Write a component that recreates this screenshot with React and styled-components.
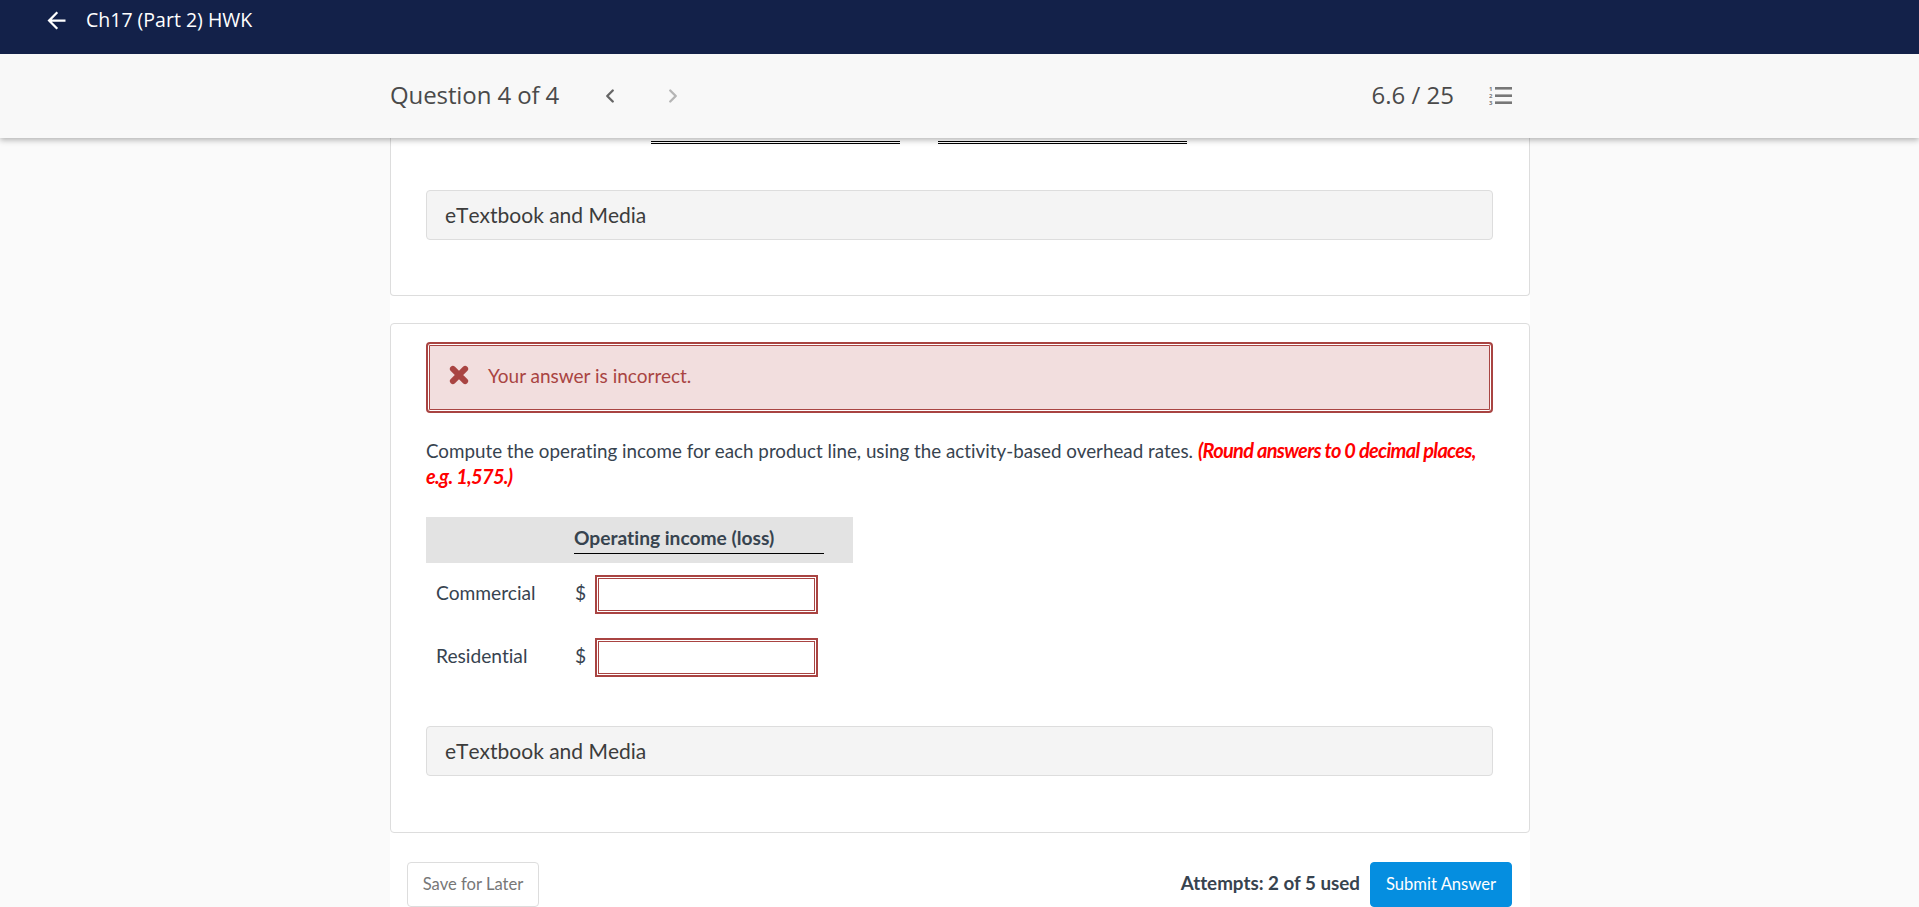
import styled, { createGlobalStyle } from "styled-components";
import { MdArrowBack } from "react-icons/md";
import { FiChevronLeft, FiChevronRight } from "react-icons/fi";

const GlobalStyle = createGlobalStyle`
    html, body {
        margin: 0;
        height: 907px;
        overflow: hidden;
        background: #fafafa;
        font-family: Lato, "Liberation Sans", sans-serif;
        font-variant-ligatures: none;
        color: #37434f;
    }
`;

const ListIcon = () => (
    <svg width="23" height="20" viewBox="0 0 23 20" fill="#777">
        <rect x="6" y="1" width="17" height="2.6" />
        <rect x="6" y="8.4" width="17" height="2.6" />
        <rect x="6" y="15.4" width="17" height="2.6" />
        <text x="0" y="5" fontSize="6" fontWeight="700" fontFamily="Open Sans">1</text>
        <text x="0" y="12" fontSize="6" fontWeight="700" fontFamily="Open Sans">2</text>
        <text x="0" y="19" fontSize="6" fontWeight="700" fontFamily="Open Sans">3</text>
    </svg>
);

const CrossIcon = () => (
    <AlertGlyph viewBox="0 0 18 18">
        <path d="M3.5 3.5 L14.5 14.5 M14.5 3.5 L3.5 14.5" stroke="#a94442" strokeWidth="5.4" strokeLinecap="round" />
    </AlertGlyph>
);

const EbookBox = () => <Ebook>eTextbook and Media</Ebook>;

const AnswerRow = ({ label }) => (
    <Row>
        <RowLabel>{label}</RowLabel>
        <Dollar>$</Dollar>
        <AnswerInput type="text" aria-label={label} />
    </Row>
);

const App = () => {
    return (
        <>
            <GlobalStyle />
            <TopBar>
                <BackArrow aria-label="back" />
                <Title>Ch17 (Part 2) HWK</Title>
            </TopBar>
            <SubBar>
                <QuestionCount>Question 4 of 4</QuestionCount>
                <PrevIcon />
                <NextIcon />
                <Score>6.6 / 25</Score>
                <ListIcon />
            </SubBar>
            <Column>
                <PrevCard>
                    <Stubs>
                        <Stub />
                        <Stub />
                    </Stubs>
                    <EbookBox />
                </PrevCard>
                <Card>
                    <Alert>
                        <CrossIcon />
                        <AlertText>Your answer is incorrect.</AlertText>
                    </Alert>
                    <Prompt>
                        Compute the operating income for each product line, using the activity-based overhead rates.{" "}
                        <Hint>(Round answers to 0 decimal places, e.g. 1,575.)</Hint>
                    </Prompt>
                    <AnswerTable>
                        <TableHead>
                            <HeadCell>Operating income (loss)</HeadCell>
                        </TableHead>
                        <AnswerRow label="Commercial" />
                        <AnswerRow label="Residential" />
                    </AnswerTable>
                    <EbookBox />
                </Card>
                <Footer>
                    <SaveButton>Save for Later</SaveButton>
                    <FooterRight>
                        <Attempts>Attempts: 2 of 5 used</Attempts>
                        <SubmitButton>Submit Answer</SubmitButton>
                    </FooterRight>
                </Footer>
            </Column>
        </>
    );
};

const TopBar = styled.div`
    height: 54px;
    background: #132149;
    color: #fff;
    display: flex;
    align-items: flex-start;
    padding: 7px 0 0 43px;
    box-sizing: border-box;
    position: relative;
    z-index: 3;
`;

const BackArrow = styled(MdArrowBack)`
    width: 27px;
    height: 27px;
`;

const Title = styled.div`
    font-family: "Open Sans", sans-serif;
    font-size: 19.5px;
    line-height: 26px;
    font-weight: 500;
    margin-left: 16px;
`;

const SubBar = styled.div`
    height: 84px;
    background: #f8f8f8;
    box-shadow: 0 2px 6px rgba(0, 0, 0, 0.3);
    display: flex;
    align-items: center;
    padding: 0 407px 0 390px;
    box-sizing: border-box;
    position: relative;
    z-index: 2;
    color: #4a4a4a;
    font-family: "Open Sans", sans-serif;
`;

const QuestionCount = styled.div`
    font-size: 24px;
    font-weight: 400;
    letter-spacing: -0.1px;
    margin-top: -3px;
`;

const PrevIcon = styled(FiChevronLeft)`
    width: 22px;
    height: 22px;
    stroke-width: 2.6;
    color: #666;
    margin-left: 40px;
`;

const NextIcon = styled(FiChevronRight)`
    width: 22px;
    height: 22px;
    stroke-width: 2.6;
    color: #b5b5b5;
    margin-left: 41px;
`;

const Score = styled.div`
    font-size: 24px;
    font-weight: 400;
    margin-left: auto;
    margin-right: 35px;
    margin-top: -3px;
`;

const Column = styled.div`
    width: 1140px;
    margin-left: 390px;
    background: #fff;
`;

const Card = styled.div`
    background: #fff;
    border: 1px solid #ddd;
    border-radius: 4px;
    box-sizing: border-box;
    padding: 18px 36px 56px 35px;
`;

const PrevCard = styled(Card)`
    height: 158px;
    margin-bottom: 27px;
    padding-top: 0;
    border-top: 0;
    border-radius: 0 0 4px 4px;
`;

const Stubs = styled.div`
    display: flex;
    gap: 38px;
    padding: 3px 0 0 225px;
    margin-bottom: 46px;
`;

const Stub = styled.div`
    width: 249px;
    height: 3px;
    border-top: 1px solid #000;
    border-bottom: 1px solid #000;
    box-sizing: border-box;
`;

const Ebook = styled.div`
    height: 50px;
    background: #f4f4f4;
    border: 1px solid #ddd;
    border-radius: 4px;
    box-sizing: border-box;
    padding: 0 0 2px 18px;
    display: flex;
    align-items: center;
    font-size: 21px;
    font-kerning: none;
    color: #3c3c3c;
`;

const Alert = styled.div`
    height: 71px;
    box-sizing: border-box;
    background: #f2dede;
    border: 2px solid #a94442;
    border-radius: 4px;
    box-shadow: inset 0 0 0 1px #fff, inset 0 0 0 2px #a94442;
    display: flex;
    align-items: center;
    padding: 0 0 5px 21px;
`;

const AlertGlyph = styled.svg`
    width: 20px;
    height: 20px;
    margin-right: 19px;
`;

const AlertText = styled.span`
    color: #a94442;
    font-size: 19px;
`;

const Prompt = styled.p`
    margin: 25px 0 0;
    font-size: 18.8px;
    line-height: 26px;
`;

const Hint = styled.em`
    font-size: 20px;
    line-height: 0;
    font-weight: 700;
    color: #f00;
    letter-spacing: -0.7px;
`;

const AnswerTable = styled.div`
    width: 427px;
    margin: 27px 0 49px;
`;

const TableHead = styled.div`
    height: 46px;
    background: #e3e3e3;
    padding-left: 148px;
    box-sizing: border-box;
    margin-bottom: 12px;
`;

const HeadCell = styled.div`
    width: 250px;
    height: 37px;
    box-sizing: border-box;
    border-bottom: 1px solid #000;
    font-size: 19.2px;
    font-weight: 700;
    line-height: 42px;
`;

const Row = styled.div`
    display: flex;
    align-items: center;
    height: 39px;
    margin-bottom: 24px;
    font-size: 19.2px;
    &:last-child {
        margin-bottom: 0;
    }
`;

const RowLabel = styled.div`
    width: 138px;
    padding: 0 0 4px 10px;
    box-sizing: border-box;
    margin-right: 11px;
`;

const Dollar = styled.div`
    width: 20px;
    padding-bottom: 4px;
`;

const AnswerInput = styled.input`
    width: 223px;
    height: 39px;
    box-sizing: border-box;
    padding: 0;
    background: #fff;
    border: 2px solid #a94442;
    box-shadow: inset 0 0 0 1px #fff, inset 0 0 0 2px #a94442;
    outline: none;
`;

const Footer = styled.div`
    display: flex;
    justify-content: space-between;
    padding: 29px 18px 0 17px;
`;

const FooterButton = styled.button`
    height: 45px;
    border-radius: 4px;
    box-sizing: border-box;
    font-family: inherit;
    font-size: 16.6px;
    padding: 0 0 1px;
`;

const SaveButton = styled(FooterButton)`
    width: 132px;
    background: #fff;
    border: 1px solid #ddd;
    color: #777;
`;

const FooterRight = styled.div`
    display: flex;
    align-items: center;
    gap: 10px;
`;

const Attempts = styled.div`
    font-size: 18.8px;
    font-weight: 700;
    padding-bottom: 5px;
`;

const SubmitButton = styled(FooterButton)`
    width: 142px;
    background: #058ee0;
    border: 1px solid #058ee0;
    color: #fff;
`;

export default App;
